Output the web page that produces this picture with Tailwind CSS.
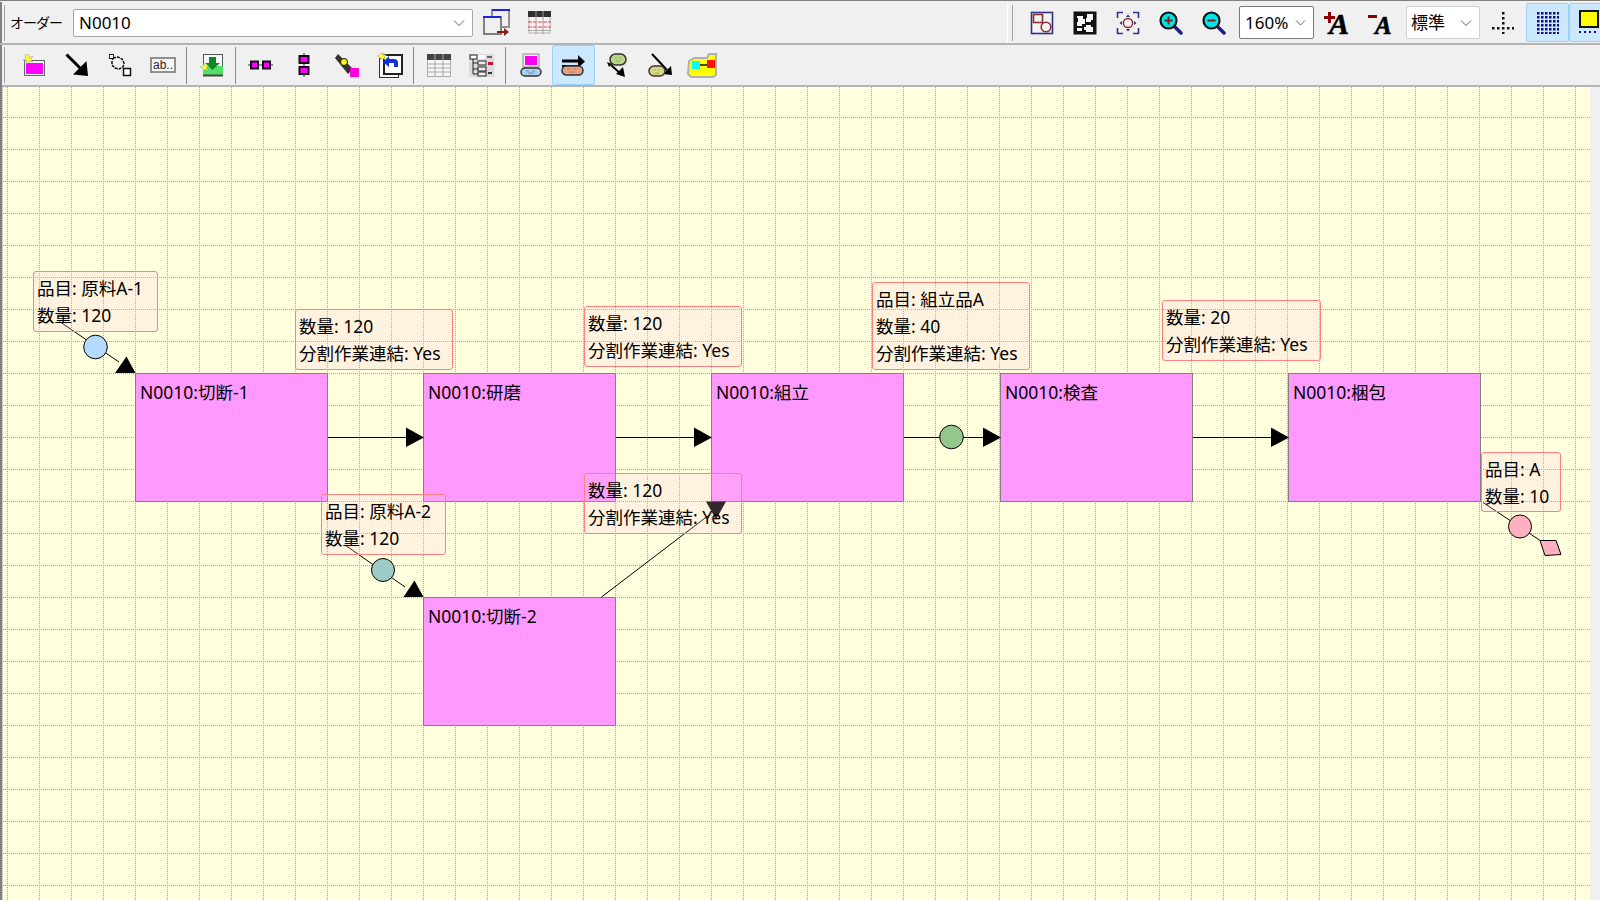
<!DOCTYPE html>
<html lang="ja">
<head>
  <meta charset="UTF-8">
  <title>オーダー</title>
  <script src="https://cdn.jsdelivr.net/npm/@tailwindcss/browser@4"></script>
</head>
<body class="w-[1600px] h-[900px] overflow-hidden bg-[#f0f0f0] text-black font-['Noto_Sans','Noto_Sans_CJK_JP',sans-serif]">
  <div class="h-[1px] bg-[#808080]"></div>

  <!-- Row 1 -->
  <div class="flex h-[44px] border-b-2 border-[#b4b4b4] pt-[1px]">
    <div class="w-[1008px] shrink-0 flex items-center border-r border-white">
      <div class="w-[2px] h-full bg-[#808080]"></div>
      <div class="w-[1px] ml-[2px] h-[36px] bg-[#a0a0a0]"></div>
      <span class="ml-[5px] w-[63px] text-[14px] tracking-[-1px] leading-none">オーダー</span>
      <div class="w-[400px] h-[28px] bg-white border border-[#a8a8a8] rounded-[2px] flex items-center justify-between pl-[5px] pr-[7px] text-[17px]">
        <span>N0010</span>
        <svg width="12" height="6" viewBox="0 0 12 6"><polyline points="1,0.5 6,5.5 11,0.5" fill="none" stroke="#606060"/></svg>
      </div>
      <div class="w-[43px] ml-[1px] flex justify-center">
        <svg width="28" height="27" viewBox="0 0 28 27"><rect x="10" y="1" width="17" height="17" fill="#f0f0f0" stroke="#909090" stroke-width="2"/><rect x="10" y="0" width="18" height="2" fill="#2222dd"/><rect x="2" y="8" width="17" height="17" fill="#f0f0f0" stroke="#808080" stroke-width="2"/><rect x="1" y="7" width="18" height="2" fill="#2222dd"/><path d="M15 23h8" stroke="#8b1a1a" stroke-width="2"/><path d="M22 19l5 4-5 4z" fill="#8b1a1a"/></svg>
      </div>
      <div class="w-[43px] ml-[1px] flex justify-center">
        <svg width="23" height="23" viewBox="0 0 23 23"><rect x="1" y="1" width="21" height="21" fill="#f4f4f4" stroke="#b0b0b0"/><rect x="0" y="0" width="23" height="6" fill="#303030"/><path d="M8 0v6M15 0v6" stroke="#999"/><path d="M0 11h23M0 16h23" stroke="#dd4444" stroke-dasharray="4 1"/><path d="M8 6v17M15 6v17" stroke="#c09090"/><rect x="0" y="19" width="23" height="1" fill="#aaa"/></svg>
      </div>
    </div>
    <div class="w-[1px] ml-[4px] mt-[3px] h-[36px] bg-[#a0a0a0] shrink-0"></div>
    <div class="flex items-center ml-[7px] shrink-0">
      <div class="w-[43px] flex justify-center">
        <svg width="24" height="24" viewBox="0 0 24 24"><rect x="1.500" y="1.500" width="21" height="21" fill="#f4f4f4" stroke="#303088" stroke-width="1.600"/><rect x="3.500" y="3.500" width="9" height="8" fill="none" stroke="#8b3030" stroke-width="1.600"/><circle cx="16" cy="16" r="4.800" fill="none" stroke="#8b3030" stroke-width="1.600"/></svg>
      </div>
      <div class="w-[43px] flex justify-center">
        <svg width="24" height="24" viewBox="0 0 24 24"><rect x="0.500" y="0.500" width="23" height="23" fill="#111"/><path d="M4 5h6v3h2v5H9v2H4v-4h1V7H4zM14 3h6v6h-2v2h-5V7h1V5z" fill="#f4f4f4"/><path d="M13 14h5v2h2v5h-7v-2h-2v-3h2z" fill="#f4f4f4"/><path d="M4 17h5v3H4z" fill="#f4f4f4"/></svg>
      </div>
      <div class="w-[43px] flex justify-center">
        <svg width="24" height="24" viewBox="0 0 24 24"><path d="M7 1.500H1.500V7M17 1.500h5.500V7M1.500 17v5.500H7M22.500 17v5.500H17" fill="none" stroke="#303088" stroke-width="1.600"/><circle cx="12" cy="12" r="4.600" fill="#f4f4f4" stroke="#8b3030" stroke-width="1.500"/><path d="M12 3.500l2 2.500h-4zM12 20.500l2-2.500h-4zM3.500 12l2.500-2v4zM20.500 12l-2.500-2v4z" fill="#303088"/></svg>
      </div>
      <div class="w-[43px] flex justify-center">
        <svg width="24" height="24" viewBox="0 0 24 24"><path d="M14 14l8 8" stroke="#202080" stroke-width="3.500" stroke-linecap="round"/><circle cx="9.500" cy="9.500" r="8" fill="#00e5e5" stroke="#111" stroke-width="2.200"/><path d="M5.500 9.500h8M9.500 5.500v8" stroke="#8b1a1a" stroke-width="2"/></svg>
      </div>
      <div class="w-[43px] flex justify-center">
        <svg width="24" height="24" viewBox="0 0 24 24"><path d="M14 14l8 8" stroke="#202080" stroke-width="3.500" stroke-linecap="round"/><circle cx="9.500" cy="9.500" r="8" fill="#00e5e5" stroke="#111" stroke-width="2.200"/><path d="M5.500 9.500h8" stroke="#8b1a1a" stroke-width="2"/></svg>
      </div>
      <div class="ml-[4px] w-[75px] h-[33px] bg-white border border-[#7a7a7a] rounded-[2px] flex items-center justify-between pl-[5px] pr-[7px] text-[17px]">
        <span>160%</span>
        <svg width="11" height="6" viewBox="0 0 11 6"><polyline points="1,0.5 5.500,5 10,0.5" fill="none" stroke="#606060"/></svg>
      </div>
      <div class="w-[43px] ml-[1px] flex justify-center">
        <svg class="overflow-visible" width="26" height="24" viewBox="0 0 26 24"><path d="M0 5h4V1h3v4h4v3H7v4H4V8H0z" fill="#8b0000"/><text x="5" y="23" font-family="'Liberation Serif',serif" font-size="30" font-weight="700" font-style="italic" stroke="#000" stroke-width=".6">A</text></svg>
      </div>
      <div class="w-[43px] flex justify-center">
        <svg class="overflow-visible" width="26" height="24" viewBox="0 0 26 24"><path d="M1 4h9v3H1z" fill="#8b0000"/><text x="8" y="23" font-family="'Liberation Serif',serif" font-size="25" font-weight="700" font-style="italic" stroke="#000" stroke-width=".6">A</text></svg>
      </div>
      <div class="ml-[5px] w-[74px] h-[33px] bg-white border border-[#d0d0d0] rounded-[2px] flex items-center justify-between pl-[4px] pr-[7px] text-[17px]">
        <span>標準</span>
        <svg width="12" height="6" viewBox="0 0 12 6"><polyline points="1,0.5 6,5.500 11,0.5" fill="none" stroke="#606060"/></svg>
      </div>
      <div class="w-[46px] flex justify-center">
        <svg width="22" height="22" viewBox="0 0 22 22"><path d="M10 0h2.500v2.500h-2.500zM10 5h2.500v2.500h-2.500zM10 10h2.500v2.500h-2.500zM10 20h2.500v2.500h-2.500zM0 15h2.500v2.500H0zM5 15h2.500v2.500H5zM10 15h2.500v2.500h-2.500zM15 15h2.500v2.500h-2.500zM20 15h2.500v2.500h-2.500z" fill="#111"/></svg>
      </div>
      <div class="w-[43px] h-[39px] bg-[#cce8ff] border border-[#99d1ff] rounded-[2px] flex items-center justify-center">
        <svg width="22" height="22" viewBox="0 0 22 22"><defs><pattern id="dots" width="4" height="4" patternUnits="userSpaceOnUse"><rect width="2.500" height="2.500" fill="#101080"/></pattern></defs><rect width="22" height="22" fill="url(#dots)"/></svg>
      </div>
      <div class="w-[43px] h-[39px] bg-[#cce8ff] border border-[#99d1ff] rounded-[2px] flex items-center pl-[9px] shrink-0">
        <svg width="22" height="25" viewBox="0 0 22 25"><rect x="1" y="1" width="18" height="16" fill="#ffff00" stroke="#111" stroke-width="2"/><path d="M0 21h2v2H0zM5 21h2v2H5zM10 21h2v2h-2zM15 21h2v2h-2z" fill="#101080"/></svg>
      </div>
    </div>
  </div>

  <!-- Row 2 -->
  <div class="flex items-center h-[42px] border-b-2 border-[#b4b4b4] pl-[12px] relative">
    <div class="absolute left-0 top-0 w-[2px] h-[42px] bg-[#808080]"></div>
    <div class="absolute left-[4px] top-[2px] w-[1px] h-[36px] bg-[#a0a0a0]"></div>
    <div class="w-[43px] flex justify-center">
      <svg width="24" height="24" viewBox="0 0 24 24"><rect x="2.500" y="7.500" width="20" height="15" fill="#f0f0f0" stroke="#666"/><rect x="4" y="10" width="17" height="11" fill="#ff00ff"/><path d="M6 1l1.500 3.500L11 3 8.500 6l2 3-3.500-1-2 3-.5-3.500L1 7l3-1.500L3 2z" fill="#ffff33" stroke="#999" stroke-width=".5"/></svg>
    </div>
    <div class="w-[43px] flex justify-center">
      <svg width="24" height="24" viewBox="0 0 24 24"><path d="M1.500 1.500L17 17" stroke="#000" stroke-width="3"/><path d="M23 23L8 21.500 21.500 8z"/></svg>
    </div>
    <div class="w-[43px] flex justify-center">
      <svg width="24" height="24" viewBox="0 0 24 24"><path d="M5 5l5-1 4 2 2 4-1 4-4 2-4-1-3-3v-4z" fill="none" stroke="#111" stroke-width="1.500" stroke-dasharray="3 1"/><rect x="1.500" y="1.500" width="4" height="4" fill="#fff" stroke="#222"/><rect x="15.500" y="15.500" width="7" height="7" fill="#fff" stroke="#111" stroke-width="1.500"/></svg>
    </div>
    <div class="w-[43px] flex justify-center">
      <svg width="26" height="16" viewBox="0 0 26 16"><rect x="1" y="1" width="24" height="14" fill="#f8f8f8" stroke="#909090" stroke-width="2"/><text x="3" y="12" font-family="'Liberation Sans',sans-serif" font-size="12" fill="#222">ab..</text></svg>
    </div>
    <div class="w-[6px] flex justify-center"><div class="w-[1px] h-[37px] bg-[#8c8c8c] -ml-[1px]"></div></div>
    <div class="w-[43px] flex justify-center">
      <svg width="24" height="25" viewBox="0 0 24 25"><rect x="3.500" y="1.500" width="19" height="21" fill="#f8f8f8" stroke="#555"/><rect x="3" y="13" width="20" height="9" fill="#55dd66"/><path d="M9 4h7v6h4l-7.500 7L5 10h4z" fill="#118822"/><path d="M4 10l1.500 3 3-1-2 2.500 1.500 3-3-1.500-2 2.500v-3.500L0 14l3-1z" fill="#ffff33" stroke="#999" stroke-width=".4"/><path d="M3 22.500h20" stroke="#444" stroke-width="2"/></svg>
    </div>
    <div class="w-[6px] flex justify-center"><div class="w-[1px] h-[37px] bg-[#8c8c8c] -ml-[1px]"></div></div>
    <div class="w-[43px] flex justify-center">
      <svg width="25" height="10" viewBox="0 0 25 10"><path d="M0 5h25" stroke="#333"/><rect x="3" y="1.500" width="7" height="7" fill="#ff00ff" stroke="#111" stroke-width="2"/><rect x="15" y="1.500" width="7" height="7" fill="#ff00ff" stroke="#111" stroke-width="2"/></svg>
    </div>
    <div class="w-[43px] flex justify-center">
      <svg width="12" height="24" viewBox="0 0 12 24"><path d="M6 0v24" stroke="#333"/><rect x="1.500" y="3" width="9" height="7" fill="#ff00ff" stroke="#111" stroke-width="2"/><rect x="1.500" y="14" width="9" height="7" fill="#ff00ff" stroke="#111" stroke-width="2"/></svg>
    </div>
    <div class="w-[43px] flex justify-center">
      <svg width="24" height="24" viewBox="0 0 24 24"><path d="M3 1L18 16l-5 5L0 5z" fill="#333"/><circle cx="9" cy="9" r="3.500" fill="#ffff00" stroke="#111"/><rect x="15" y="15" width="9" height="9" fill="#ff00dd"/></svg>
    </div>
    <div class="w-[43px] flex justify-center">
      <svg width="26" height="26" viewBox="0 0 26 26"><rect x="2.500" y="6.500" width="19" height="19" fill="#f8f8f8" stroke="#333"/><rect x="7" y="3" width="18" height="19" fill="#fff" stroke="#222" stroke-width="2"/><path d="M21 15v-4a4 4 0 0 0-4-4h-5v-3l-6 6 6 5v-4h5v4z" fill="#1030dd"/><path d="M5 0l1.500 3 3-.5-2 2.500 1.500 3-3-1.500-2 2-.5-3L0 4l3-1z" fill="#ffff33" stroke="#999" stroke-width=".4"/></svg>
    </div>
    <div class="w-[6px] flex justify-center"><div class="w-[1px] h-[37px] bg-[#8c8c8c] -ml-[1px]"></div></div>
    <div class="w-[43px] flex justify-center">
      <svg width="24" height="23" viewBox="0 0 24 23"><rect x="0.500" y="0.500" width="23" height="22" fill="#f6f6f6" stroke="#b0b0b0"/><rect width="24" height="6" fill="#444"/><path d="M8 0v23M16 0v23M0 10h24M0 14h24M0 18h24" stroke="#a8a8a8"/></svg>
    </div>
    <div class="w-[43px] flex justify-center">
      <svg width="25" height="23" viewBox="0 0 25 23"><rect width="25" height="23" fill="#dcdcdc"/><rect x="1" y="1" width="7" height="4" fill="#fff" stroke="#222"/><rect x="9" y="1" width="7" height="4" fill="#fff"/><rect x="18" y="2" width="5" height="2" fill="#666"/><rect x="9" y="7" width="8" height="4" fill="#eee" stroke="#222"/><rect x="9" y="13" width="8" height="4" fill="#eee" stroke="#222"/><rect x="9" y="18" width="8" height="4" fill="#eee" stroke="#222"/><path d="M4 5v15h5M4 9h5M4 15h5" fill="none" stroke="#222"/><rect x="19" y="8" width="5" height="3" fill="#cc1122"/><rect x="19" y="18" width="4" height="2" fill="#333"/></svg>
    </div>
    <div class="w-[6px] flex justify-center"><div class="w-[1px] h-[37px] bg-[#8c8c8c] -ml-[1px]"></div></div>
    <div class="w-[43px] flex justify-center">
      <svg width="22" height="24" viewBox="0 0 22 24"><rect x="3" y="1" width="16" height="13" fill="#f0f0f0" stroke="#888"/><rect x="5" y="3" width="12" height="9" fill="#ff00ee"/><rect x="1" y="15" width="20" height="8" rx="4" fill="#a8d0f0" stroke="#333" stroke-width="1.500"/><path d="M6 18h3M12 18h3M8 20h6" stroke="#8090b0"/></svg>
    </div>
    <div class="w-[43px] h-[40px] bg-[#cce8ff] border border-[#99d1ff] rounded-[2px] flex items-center justify-center">
      <svg width="25" height="21" viewBox="0 0 25 21"><path d="M1 6h17" stroke="#000" stroke-width="3"/><path d="M1 11h17" stroke="#000" stroke-width="2"/><path d="M17 0l7 6.500L17 13z"/><rect x="1" y="11" width="21" height="9" rx="4.500" fill="#e8a080" stroke="#333" stroke-width="1.500"/><path d="M6 14h3M12 14h3M8 17h6" stroke="#b08070"/></svg>
    </div>
    <div class="w-[43px] flex justify-center">
      <svg width="22" height="24" viewBox="0 0 22 24"><path d="M5 12L16 22" stroke="#000" stroke-width="2"/><path d="M19 24l-9-3 7-7z"/><rect x="4" y="1" width="16" height="11" rx="5.500" fill="#b8d888" stroke="#333" stroke-width="1.500"/><path d="M9 5h2M13 5h2M10 8h4" stroke="#90a880"/><path d="M1 9l5 2-3 3z"/></svg>
    </div>
    <div class="w-[43px] flex justify-center">
      <svg width="24" height="24" viewBox="0 0 24 24"><path d="M4 1L19 17" stroke="#000" stroke-width="2"/><path d="M24 22l-9-1 8-8z"/><rect x="1" y="13" width="16" height="10" rx="5" fill="#d8d880" stroke="#333" stroke-width="1.500"/><path d="M6 17h2M10 17h2M7 20h4" stroke="#a8a870"/></svg>
    </div>
    <div class="w-[43px] flex justify-center">
      <svg width="31" height="26" viewBox="0 0 31 26"><path d="M2 9l5-3h13l2-4h7v21l-3 2H4l-3-3z" fill="#ffff00" stroke="#b0b0b0" stroke-width="2"/><rect x="5" y="9" width="8" height="8" fill="#00ffff"/><rect x="20" y="8" width="8" height="8" fill="#ff1010"/><path d="M13 13h7" stroke="#111" stroke-width="1.500"/></svg>
    </div>
  </div>

  <!-- Canvas row -->
  <div class="flex h-[813px]">
    <div class="w-[2px] bg-[#808080]"></div>
    <div class="w-[1px] bg-[#d0d0d0]"></div>
    <div class="relative w-[1587px] bg-[#ffffdd] overflow-hidden">
      <svg class="absolute left-0 top-0" width="1587" height="813">
        <defs>
          <pattern id="grid" x="4" y="30" width="32" height="32" patternUnits="userSpaceOnUse">
            <path d="M.5 0V32M0 .5H32" fill="none" stroke="#a6a6a6" stroke-dasharray="1 1" shape-rendering="crispEdges"/>
          </pattern>
        </defs>
        <rect width="1587" height="813" fill="url(#grid)"/>
      </svg>

      <!-- Process boxes -->
      <div class="absolute left-[132px] top-[286px] w-[193px] h-[129px] bg-[#ff99ff] border border-[#808080] pl-[4px] pt-[5px] text-[17.5px] leading-[26px]">N0010:切断-1</div>
      <div class="absolute left-[420px] top-[286px] w-[193px] h-[129px] bg-[#ff99ff] border border-[#808080] pl-[4px] pt-[5px] text-[17.5px] leading-[26px]">N0010:研磨</div>
      <div class="absolute left-[708px] top-[286px] w-[193px] h-[129px] bg-[#ff99ff] border border-[#808080] pl-[4px] pt-[5px] text-[17.5px] leading-[26px]">N0010:組立</div>
      <div class="absolute left-[997px] top-[286px] w-[193px] h-[129px] bg-[#ff99ff] border border-[#808080] pl-[4px] pt-[5px] text-[17.5px] leading-[26px]">N0010:検査</div>
      <div class="absolute left-[1285px] top-[286px] w-[193px] h-[129px] bg-[#ff99ff] border border-[#808080] pl-[4px] pt-[5px] text-[17.5px] leading-[26px]">N0010:梱包</div>
      <div class="absolute left-[420px] top-[510px] w-[193px] h-[129px] bg-[#ff99ff] border border-[#808080] pl-[4px] pt-[5px] text-[17.5px] leading-[26px]">N0010:切断-2</div>

      <!-- Connectors, page coordinates -->
      <svg class="absolute left-0 top-0" width="1587" height="813" viewBox="3 87 1587 813">
        <g stroke="#000" stroke-width="1" fill="none">
          <path d="M59.500 321.500L119 362"/>
          <path d="M328 437.500H407M616 437.500H695M904 437.500H984M1193 437.500H1272"/>
          <path d="M345 545L405 587"/>
          <path d="M601.500 597L709 515"/>
          <path d="M1483 502.500L1541 541"/>
        </g>
        <g fill="#000">
          <path d="M115 373H135.500L126.500 356.500z"/>
          <path d="M406 427.500V447L424 437.500z"/>
          <path d="M694 427.500V447L712 437.500z"/>
          <path d="M983 427.500V447L1001 437.500z"/>
          <path d="M1271 427.500V447L1289 437.500z"/>
          <path d="M403.500 597H423.500L414.500 580.500z"/>
          <path d="M706 501.500H726L716 519.500z"/>
        </g>
        <circle cx="95.500" cy="347" r="11.800" fill="#b3dcff" stroke="#000"/>
        <circle cx="383" cy="570" r="11.500" fill="#9ecbc6" stroke="#000"/>
        <circle cx="951.500" cy="437" r="11.800" fill="#92c88e" stroke="#000"/>
        <circle cx="1520" cy="526.500" r="11.500" fill="#ffb0c0" stroke="#000"/>
        <path d="M1540 540.500H1556L1561 554.500L1545 555.500z" fill="#ffb0c0" stroke="#000"/>
      </svg>

      <!-- Notes -->
      <div class="absolute left-[30px] top-[184px] w-[125px] h-[61px] bg-[#ffc0e0]/20 border border-[#ff8080] rounded-[3px] pl-[3px] pt-[3px] text-[17.5px] leading-[27px]"><p>品目: 原料A-1</p><p>数量: 120</p></div>
      <div class="absolute left-[292px] top-[222px] w-[158px] h-[61px] bg-[#ffc0e0]/20 border border-[#ff8080] rounded-[3px] pl-[3px] pt-[3px] text-[17.5px] leading-[27px]"><p>数量: 120</p><p>分割作業連結: Yes</p></div>
      <div class="absolute left-[581px] top-[219px] w-[158px] h-[61px] bg-[#ffc0e0]/20 border border-[#ff8080] rounded-[3px] pl-[3px] pt-[3px] text-[17.5px] leading-[27px]"><p>数量: 120</p><p>分割作業連結: Yes</p></div>
      <div class="absolute left-[869px] top-[195px] w-[158px] h-[88px] bg-[#ffc0e0]/20 border border-[#ff8080] rounded-[3px] pl-[3px] pt-[3px] text-[17.5px] leading-[27px]"><p>品目: 組立品A</p><p>数量: 40</p><p>分割作業連結: Yes</p></div>
      <div class="absolute left-[1159px] top-[213px] w-[159px] h-[61px] bg-[#ffc0e0]/20 border border-[#ff8080] rounded-[3px] pl-[3px] pt-[3px] text-[17.5px] leading-[27px]"><p>数量: 20</p><p>分割作業連結: Yes</p></div>
      <div class="absolute left-[1478px] top-[365px] w-[80px] h-[60px] bg-[#ffc0e0]/20 border border-[#ff8080] rounded-[3px] pl-[3px] pt-[3px] text-[17.5px] leading-[27px]"><p>品目: A</p><p>数量: 10</p></div>
      <div class="absolute left-[318px] top-[407px] w-[125px] h-[61px] bg-[#ffc0e0]/20 border border-[#ff8080] rounded-[3px] pl-[3px] pt-[3px] text-[17.5px] leading-[27px]"><p>品目: 原料A-2</p><p>数量: 120</p></div>
      <div class="absolute left-[581px] top-[386px] w-[158px] h-[61px] bg-[#ffc0e0]/20 border border-[#ff8080] rounded-[3px] pl-[3px] pt-[3px] text-[17.5px] leading-[27px]"><p>数量: 120</p><p>分割作業連結: Yes</p></div>
    </div>
    <div class="w-[10px] bg-[#f0f0f0]"></div>
  </div>
</body>
</html>
